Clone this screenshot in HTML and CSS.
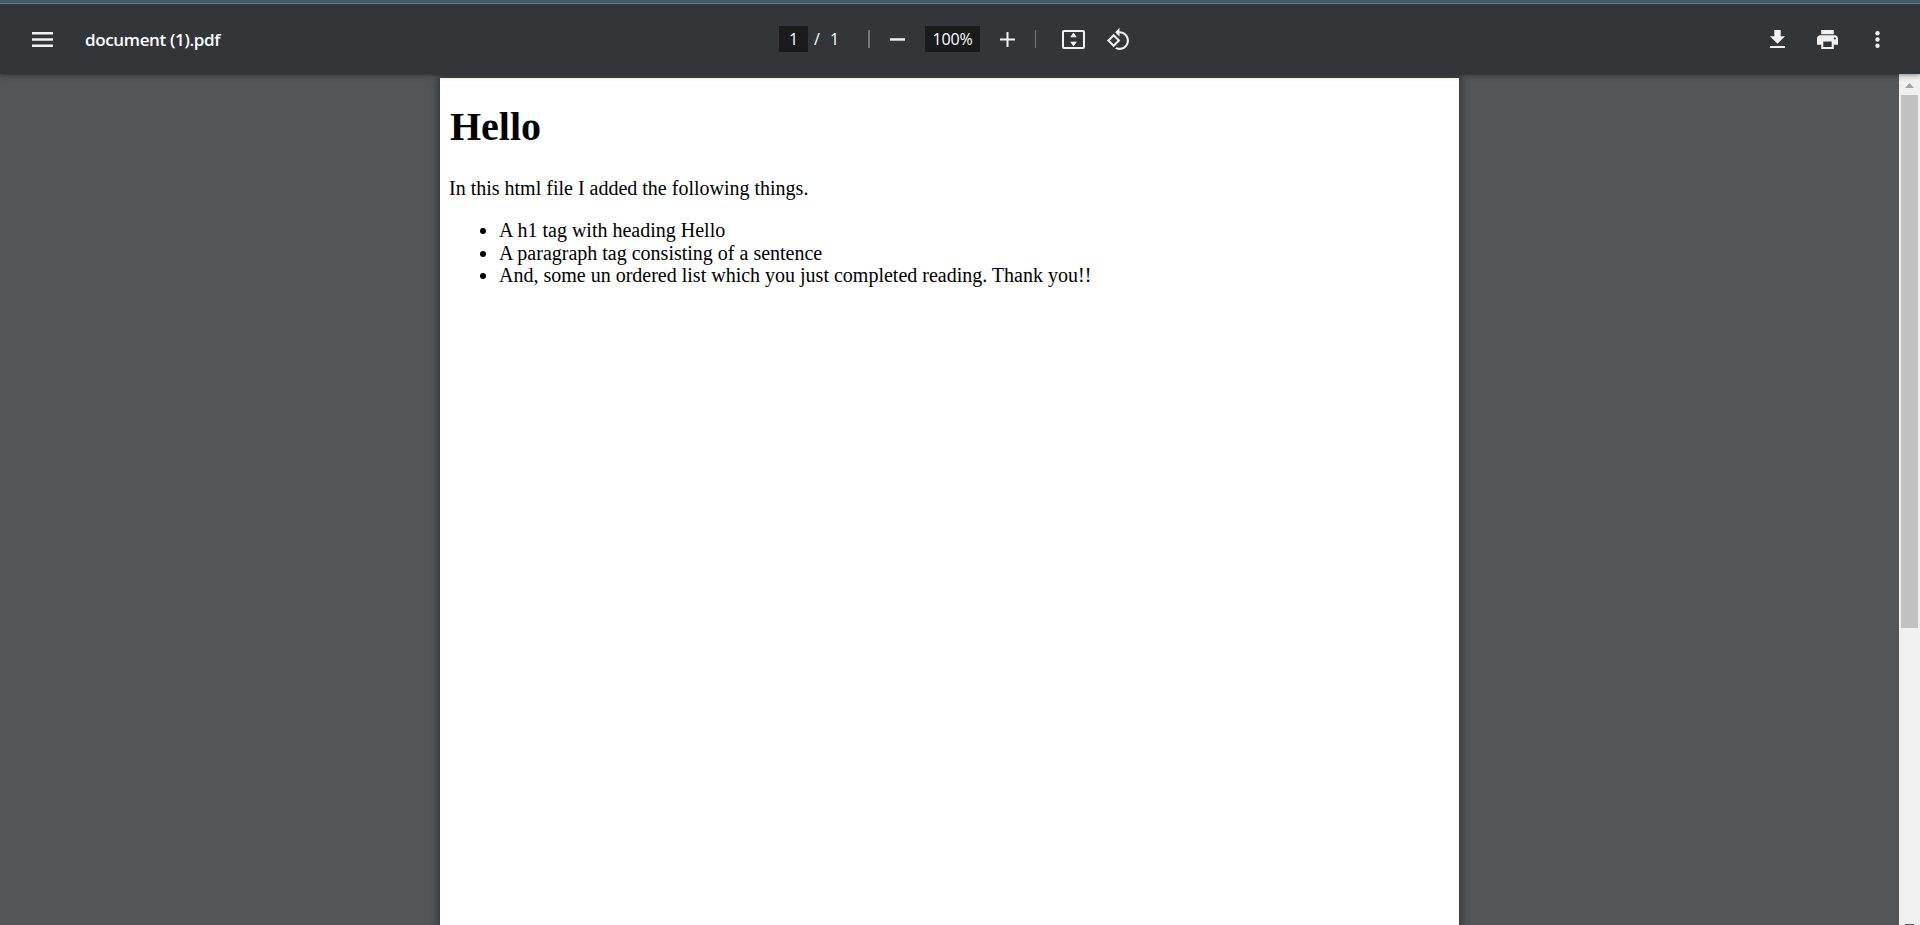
FILE: index.html
```html
<!DOCTYPE html>
<html lang="en">
<head>
<meta charset="utf-8">
<title>document (1).pdf</title>
<link rel="stylesheet" href="styles.css">
</head>
<body>
<header class="toolbar">
  <svg class="menu-icon" width="21" height="15" viewBox="0 0 21 15"><path d="M0 0h21v2.5H0zM0 6.2h21v2.5H0zM0 12.4h21V15H0z"/></svg>
  <span class="file-name">document (1).pdf</span>
  <div class="controls">
    <span class="field page-field">1</span>
    <span class="slash">/</span>
    <span class="total">1</span>
    <span class="divider divider-wide"></span>
    <svg class="minus" width="15" height="15" viewBox="0 0 15 15"><path d="M0 6.2h15v2.5H0z"/></svg>
    <span class="field zoom-field">100%</span>
    <svg class="plus" width="15" height="15" viewBox="0 0 15 15"><path d="M6.5 0h2v6.5H15v2H8.5V15h-2V8.500H0v-2h6.500z"/></svg>
    <span class="divider"></span>
    <svg class="fit" width="23" height="19" viewBox="0 0 23 19"><path fill-rule="evenodd" d="M2 0h19a2 2 0 0 1 2 2v15a2 2 0 0 1-2 2H2a2 2 0 0 1-2-2V2a2 2 0 0 1 2-2zm0 2v15h19V2zM11.5 2.600l3.200 4.400H8.300zM11.500 16.400l3.200-4.400H8.300z"/><path class="faint" d="M8.500 7.200h6V8h-6zM8.500 11h6v.8h-6z"/></svg>
    <svg class="rotate" width="25" height="25" viewBox="0 0 24 24"><path d="M7.34 6.41L.86 12.9l6.49 6.48 6.49-6.48-6.5-6.49zM3.69 12.9l3.66-3.66L11 12.9l-3.66 3.66-3.65-3.66zm15.67-6.26C17.61 4.88 15.3 4 13 4V.76L8.76 5 13 9.24V6c1.79 0 3.58.68 4.95 2.05 2.73 2.73 2.73 7.17 0 9.9C16.58 19.32 14.79 20 13 20c-.97 0-1.94-.21-2.84-.61l-1.49 1.49C10.02 21.62 11.51 22 13 22c2.3 0 4.61-.88 6.36-2.64 3.52-3.51 3.52-9.21 0-12.72z"/></svg>
  </div>
  <div class="actions">
    <svg width="15" height="18" viewBox="5 3 14 17" preserveAspectRatio="none"><path d="M19 9h-4V3H9v6H5l7 7 7-7zM5 18v2h14v-2H5z"/></svg>
    <svg class="print" width="21" height="19" viewBox="2 3 20 18" preserveAspectRatio="none"><path d="M19 8H5c-1.660 0-3 1.340-3 3v6h4v4h12v-4h4v-6c0-1.660-1.340-3-3-3zm-3 11H8v-5h8v5zm3-7c-.55 0-1-.45-1-1s.45-1 1-1 1 .45 1 1-.45 1-1 1zm-1-9H6v4h12V3z"/></svg>
    <svg class="more" width="5" height="17" viewBox="0 0 5 17"><circle cx="2.500" cy="2.200" r="2.200"/><circle cx="2.500" cy="8.500" r="2.200"/><circle cx="2.500" cy="14.800" r="2.200"/></svg>
  </div>
</header>
<main class="viewer">
  <article class="page">
    <h1 class="heading">Hello</h1>
    <p class="intro">In this html file I added the following things.</p>
    <ul class="list">
      <li class="item"><span class="first-letter">A</span> h1 tag with heading Hello</li>
      <li class="item">A paragraph tag consisting of a sentence</li>
      <li class="item">And, some un ordered list which you just completed reading. Thank you!!</li>
    </ul>
  </article>
  <div class="scrollbar">
    <svg class="arrow" width="9" height="5" viewBox="0 0 9 5"><path d="M0 5L4.500 0 9 5z"/></svg>
    <div class="thumb"></div>
    <div class="arrow-down"></div>
  </div>
</main>
</body>
</html>
```
FILE: styles.css
```css
* { box-sizing: border-box; }
body {
  margin: 0;
  height: 925px;
  overflow: hidden;
  display: flex;
  flex-direction: column;
  background: #525659;
}
.toolbar {
  position: relative;
  z-index: 1;
  flex: none;
  height: 74px;
  display: flex;
  align-items: center;
  padding: 1px 40px 0 32px;
  border-top: 3px solid #465a65;
  background: #323639;
  box-shadow: inset 0 1px #6b7a82, 0 2px 5px rgba(0, 0, 0, .28), 0 0 3px rgba(0, 0, 0, .25);
  color: #fff;
  fill: #f1f1f1;
  font: 16px/26px "Open Sans", "Noto Sans", sans-serif;
}
.toolbar svg { display: block; flex: none; }
.file-name {
  width: 140px;
  margin-left: 32px;
  padding-top: 2px;
  font-size: 17px;
  font-weight: 600;
  letter-spacing: -.35px;
  white-space: nowrap;
}
.controls {
  display: flex;
  align-items: center;
  margin-left: 554px;
}
.field {
  height: 26px;
  background: #191b1c;
  text-align: center;
}
.page-field { width: 29px; }
.slash { width: 17px; padding-left: 6px; }
.total { width: 16px; margin-left: 5px; }
.divider {
  width: 1px;
  height: 18px;
  margin-left: 20px;
  background: #72777a;
}
.divider-wide { width: 2px; margin-left: 22px; }
.minus { margin-left: 20px; }
.zoom-field { width: 55px; margin-left: 20px; letter-spacing: -.2px; }
.plus { margin-left: 20px; }
.fit { margin-left: 26px; }
.faint { opacity: .4; }
.rotate { margin-left: 21px; }
.actions {
  display: flex;
  align-items: center;
  margin-left: auto;
}
.print { margin-left: 32px; }
.more { margin-left: 37px; }
.viewer {
  flex: 1;
  display: flex;
  align-items: stretch;
  padding-left: 440px;
}
.page {
  width: 1019px;
  margin-top: 4px;
  padding: 0 9px;
  background: #fff;
  box-shadow: 0 0 8px 2px rgba(0, 0, 0, .42);
  color: #000;
  font: 20px/22.5px "Liberation Serif", serif;
}
.heading { margin: 26px 0 0; padding-left: 1px; font-size: 40px; line-height: 46px; }
.intro { margin: 27px 0 0; line-height: 23px; }
.list { margin: 19px 0 0; padding-left: 50px; }
.first-letter { letter-spacing: -1px; }
.scrollbar {
  width: 21px;
  margin-left: auto;
  display: flex;
  flex-direction: column;
  align-items: center;
  background: #f0f0f0;
}
.arrow { fill: #a3a3a3; margin-top: 9px; flex: none; }
.thumb {
  width: 17px;
  height: 533px;
  margin-top: 7px;
  background: #c1c1c1;
}
.arrow-down {
  width: 9px;
  height: 1px;
  margin-top: auto;
  background: #505050;
}
```
